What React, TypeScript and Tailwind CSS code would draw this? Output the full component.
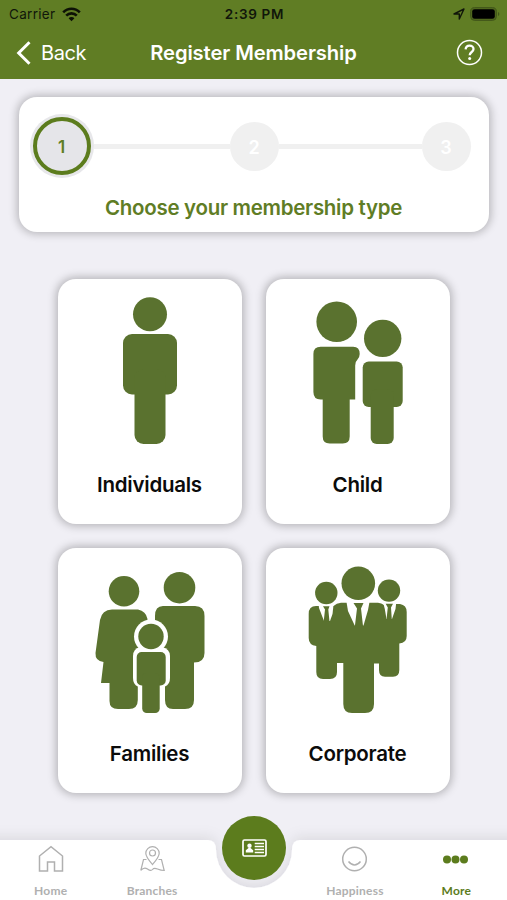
import type { ReactNode } from "react";

const LABEL = "font-['Inter','Liberation_Sans',sans-serif]";

function StatusBar() {
  return (
    <div className="grid h-[28px] grid-cols-3 items-center pl-[9px] pr-[7px] text-[13px] text-[#10160a]">
      <div className="flex items-center gap-[6px]">
        <span className="w-[47px] whitespace-nowrap text-[13.5px] tracking-[0.3px]">Carrier</span>
        <svg width="19" height="15" viewBox="0 0 19 15" fill="none" stroke="#0d1206" strokeWidth="2.6">
          <path d="M1.2 5.4C6 .5 13 .5 17.8 5.4" />
          <path d="M4.2 8.6C7.2 5.6 11.8 5.6 14.8 8.6" />
          <path d="M6.6 11.2 9.5 14.3 12.4 11.2C10.8 9.6 8.2 9.6 6.6 11.2Z" fill="#0d1206" stroke="none" />
        </svg>
      </div>
      <span className="whitespace-nowrap text-center text-[13.5px] font-semibold tracking-[0.7px]">2:39 PM</span>
      <div className="flex items-center justify-end gap-[5px]">
        <svg width="12" height="12" viewBox="0 0 12 12" fill="none" stroke="#10160a" strokeWidth="1.4" strokeLinejoin="round">
          <path d="M1 6 11 1 6.3 11V6Z" />
        </svg>
        <svg width="30" height="14" viewBox="0 0 30 14">
          <rect x=".6" y=".6" width="25.8" height="12.8" rx="4" fill="#51691f" stroke="#42571a" />
          <rect x="2.2" y="2.2" width="22.6" height="9.6" rx="2.4" fill="#000" />
          <path d="M28 5c1.8.8 1.8 3.2 0 4Z" fill="#42571a" />
        </svg>
      </div>
    </div>
  );
}

function Header() {
  return (
    <header className="h-[79px] bg-[#607d24]">
      <StatusBar />
      <div className="flex h-[49px] items-center justify-between pl-4 pr-[24px] text-white">
        <div className="flex w-[110px] items-center gap-[10px]">
          <svg width="15" height="24" viewBox="0 0 15 24" fill="none" stroke="#fff" strokeWidth="3">
            <path d="M13.5 1.3 2.7 12 13.5 22.7" />
          </svg>
          <span className="text-[20px] tracking-[-0.4px]">Back</span>
        </div>
        <h1 className="whitespace-nowrap pt-px text-[20.2px] font-semibold tracking-[-0.1px]">Register Membership</h1>
        <div className="flex w-[102px] justify-end">
          <svg width="27" height="27" viewBox="0 0 27 27" fill="none" stroke="#fff">
            <circle cx="13.5" cy="13.5" r="12" strokeWidth="1.5" />
            <path d="M9.6 10.4c.2-2.5 1.8-3.7 4-3.7s3.9 1.4 3.9 3.4c0 3-3.8 2.8-3.8 6.2" strokeWidth="2.3" />
            <circle cx="13.7" cy="19.4" r="1.5" fill="#fff" stroke="none" />
          </svg>
        </div>
      </div>
    </header>
  );
}

function Stepper() {
  return (
    <section className="mx-auto mt-[18px] h-[135px] w-[470px] rounded-[18px] bg-white shadow-[0_0_9px_2px_rgba(0,0,0,0.24)]">
      <div className="flex h-[98px] items-center pl-[11px] pr-[18px]">
        <div className="flex size-16 shrink-0 items-center justify-center rounded-full bg-[#e7e7ea]">
          <div className="flex size-[58px] items-center justify-center rounded-full border-4 border-[#5c7c1d] bg-[#e5e5e9] pt-[3px] text-[17px] font-semibold text-[#5f7d25]">
            1
          </div>
        </div>
        <div className="h-[5px] w-[136px] bg-[#f0f0f0]" />
        <div className="flex size-[49px] items-center justify-center rounded-full bg-[#f0f0f0] pt-[2px] text-[18px] font-semibold text-white">
          2
        </div>
        <div className="h-[5px] flex-1 bg-[#f0f0f0]" />
        <div className="flex size-[49px] items-center justify-center rounded-full bg-[#f0f0f0] pt-[2px] text-[18px] font-semibold text-white">
          3
        </div>
      </div>
      <p className="text-center text-[20.5px] font-semibold leading-[25px] tracking-[-0.3px] text-[#5f7d25]">
        Choose your membership type
      </p>
    </section>
  );
}

function IndividualArt() {
  return (
    <g>
      <circle cx="92" cy="35.3" r="17" />
      <rect x="65" y="55" width="54" height="60.5" rx="9" />
      <rect x="76.5" y="90" width="31" height="75" rx="9" />
    </g>
  );
}

function ChildArt() {
  return (
    <g transform="translate(-0.3 0.5)">
      <circle cx="71" cy="42.3" r="20.3" />
      <path d="M55 67.3H87.5Q94 67.3 94 74.5Q94 78 91.5 80.5Q89.5 82 89.5 86V120H84V157Q84 164 77 164H64Q57 164 57 157V120H55Q47.7 120 47.7 112.5V74.5Q47.7 67.3 55 67.3Z" />
      <circle cx="117" cy="58.9" r="18.7" />
      <rect x="97" y="82" width="40" height="45.5" rx="6" />
      <rect x="105" y="110" width="23" height="54.5" rx="6" />
    </g>
  );
}

function FamilyArt() {
  return (
    <g>
      <circle cx="66" cy="43.3" r="15.3" />
      <circle cx="121.5" cy="39.7" r="15.8" />
      <path d="M54 61.5H80Q88 63 89.5 71V137H79.8V152Q79.8 161 71 161H60Q51.5 161 51.5 153V135H43L45.5 114Q37 113 37.5 105L42 72Q44 61.5 54 61.5Z" />
      <path d="M105 58H137Q146.5 58 146.5 68V105Q146.5 114.5 136 114.5V152Q136 161 127 161H115Q107 161 107 152V137L97 100V68Q97 58 105 58Z" />
      <circle cx="93" cy="88.5" r="17" fill="#fff" />
      <path d="M82 99H104Q112 101 112 108V130Q112 136.5 107 138.5H79.8Q75 136.5 75 130V108Q75 101 82 99Z" fill="#fff" />
      <circle cx="93" cy="88.5" r="12.7" />
      <rect x="78.7" y="104" width="29" height="33.5" rx="5" />
      <rect x="84.2" y="125" width="17.5" height="40" rx="4.5" />
    </g>
  );
}

function CorporateArt() {
  return (
    <g>
      <circle cx="60.3" cy="45" r="11.2" />
      <circle cx="92.3" cy="35.3" r="16.8" />
      <circle cx="123" cy="42.6" r="11.2" />
      <path d="M50 58H67.5Q70.5 55 75 54.8H112Q115.5 55 118 57L130 56H134Q140.7 57 140.7 64V88Q140.7 95 133.3 95.5V122Q133.3 128.8 127 128.8H119Q113 128.8 113 122V115.5H108V156Q108 165 99 165H86Q77.3 165 77.3 156V115H71V124Q71 131 64 131H57Q50.3 131 50.3 124V98Q42.7 97 42.7 90V66Q42.7 58 50 58Z" />
      <path d="M52.7 57H67.5L66.5 66 64 73H58L53 60Z" fill="#fff" />
      <path d="M80.5 54H103.5L102 62 97.5 77.5H88.7L82 63Z" fill="#fff" />
      <path d="M117 54H130.3L129.5 61 126 71H120.5L118.8 61Z" fill="#fff" />
      <path d="M57 58.3H63.5L62.3 61.5 63.5 73.5H57.7L59 61.5Z" />
      <path d="M87.5 55H97.5L95 60.5 97 78H88.9L91 60.5Z" />
      <path d="M119.7 55.8H127L125 59.5 125.8 71.5H120.5L121.8 59.5Z" />
    </g>
  );
}

function TypeTile({ label, children }: { label: string; children: ReactNode }) {
  return (
    <button className="flex h-[245px] flex-col items-center rounded-[18px] bg-white shadow-[0_0_8px_2px_rgba(0,0,0,0.25)]">
      <svg width="184" height="191" viewBox="0 0 184 191" fill="#5a722f">
        {children}
      </svg>
      <span className="text-[20.5px] font-semibold leading-[30px] tracking-[-0.25px] text-[#0b0b0b]">{label}</span>
    </button>
  );
}

function TabItem({ label, active, children }: { label: string; active?: boolean; children: ReactNode }) {
  return (
    <div
      className={`flex flex-1 flex-col items-center font-['Lato','Open_Sans',sans-serif] text-[12px] font-bold ${
        active ? "text-[#5c7c1d]" : "text-[#b0b0b0]"
      }`}
    >
      <svg width="30" height="30" viewBox="0 0 30 30" fill="none" stroke="currentColor" strokeWidth="1.5">
        {children}
      </svg>
      <span className="mt-[9px] leading-[16px] tracking-[0.2px]">{label}</span>
    </div>
  );
}

function TabBar() {
  return (
    <nav className="relative h-[60px] shrink-0">
      <svg className="absolute -top-[30px] left-0" width="507" height="90" viewBox="0 0 507 90">
        <defs>
          <filter id="barShadow" x="-10%" y="-50%" width="120%" height="200%">
            <feDropShadow dx="0" dy="-2" stdDeviation="7" floodColor="#000" floodOpacity="0.1" />
          </filter>
        </defs>
        <path
          d="M-20 30H208Q216 30 216 40A38 38 0 0 0 292 40Q292 30 300 30H527V120H-20Z"
          fill="#fff"
          filter="url(#barShadow)"
        />
      </svg>
      <div className="absolute -top-[24px] left-[222px] flex size-16 items-center justify-center rounded-full bg-[#5c7c1d]">
        <svg width="25" height="18" viewBox="0 0 25 18" fill="none" stroke="#fff">
          <rect x="1" y="1" width="23" height="16" rx="1.5" strokeWidth="1.7" />
          <circle cx="7.5" cy="6.7" r="2.2" fill="#fff" stroke="none" />
          <path d="M3.8 13.5V11.3L6.5 9H8.5L11.2 11.3V13.5Z" fill="#fff" stroke="none" />
          <path d="M12.7 4.5H22M12.7 7.5H22M12.7 10.5H22M12.7 13.5H22" strokeWidth="1.4" />
        </svg>
      </div>
      <div className="relative flex pt-1">
        <TabItem label="Home">
          <path d="M3.5 27V12L15 2.7 26.5 12V27H18.5V18H11.5V27Z" />
        </TabItem>
        <TabItem label="Branches">
          <path d="M15.5 20.5C11.5 16 8.8 13 8.8 9.3a6.7 6.7 0 0 1 13.4 0C22.2 13 19.5 16 15.5 20.5Z" strokeWidth="1.2" />
          <circle cx="15.5" cy="9" r="3" strokeWidth="1.2" />
          <path d="M9.5 15.5H6.5L3.8 26.5Q7 22.5 10.5 25T15.5 25.5 20.5 25 27.2 26.5L24.5 15.5H21.5" strokeWidth="1.2" />
        </TabItem>
        <div className="flex-1" />
        <TabItem label="Happiness">
          <circle cx="14.5" cy="15" r="11.8" />
          <path d="M8.5 17.5Q14.5 24.5 20.5 17.5" />
        </TabItem>
        <TabItem label="More" active>
          <g fill="currentColor" stroke="none">
            <circle cx="6" cy="15.5" r="4" />
            <circle cx="14.5" cy="15.5" r="4" />
            <circle cx="23" cy="15.5" r="4" />
          </g>
        </TabItem>
      </div>
    </nav>
  );
}

export default function App() {
  return (
    <div className={`flex h-[900px] w-[507px] flex-col overflow-hidden bg-[#f0eff5] ${LABEL}`}>
      <Header />
      <main className="flex-1">
        <Stepper />
        <div className="mx-auto mt-[47px] grid w-[392px] grid-cols-2 gap-6">
          <TypeTile label="Individuals">
            <IndividualArt />
          </TypeTile>
          <TypeTile label="Child">
            <ChildArt />
          </TypeTile>
          <TypeTile label="Families">
            <FamilyArt />
          </TypeTile>
          <TypeTile label="Corporate">
            <CorporateArt />
          </TypeTile>
        </div>
      </main>
      <TabBar />
    </div>
  );
}
